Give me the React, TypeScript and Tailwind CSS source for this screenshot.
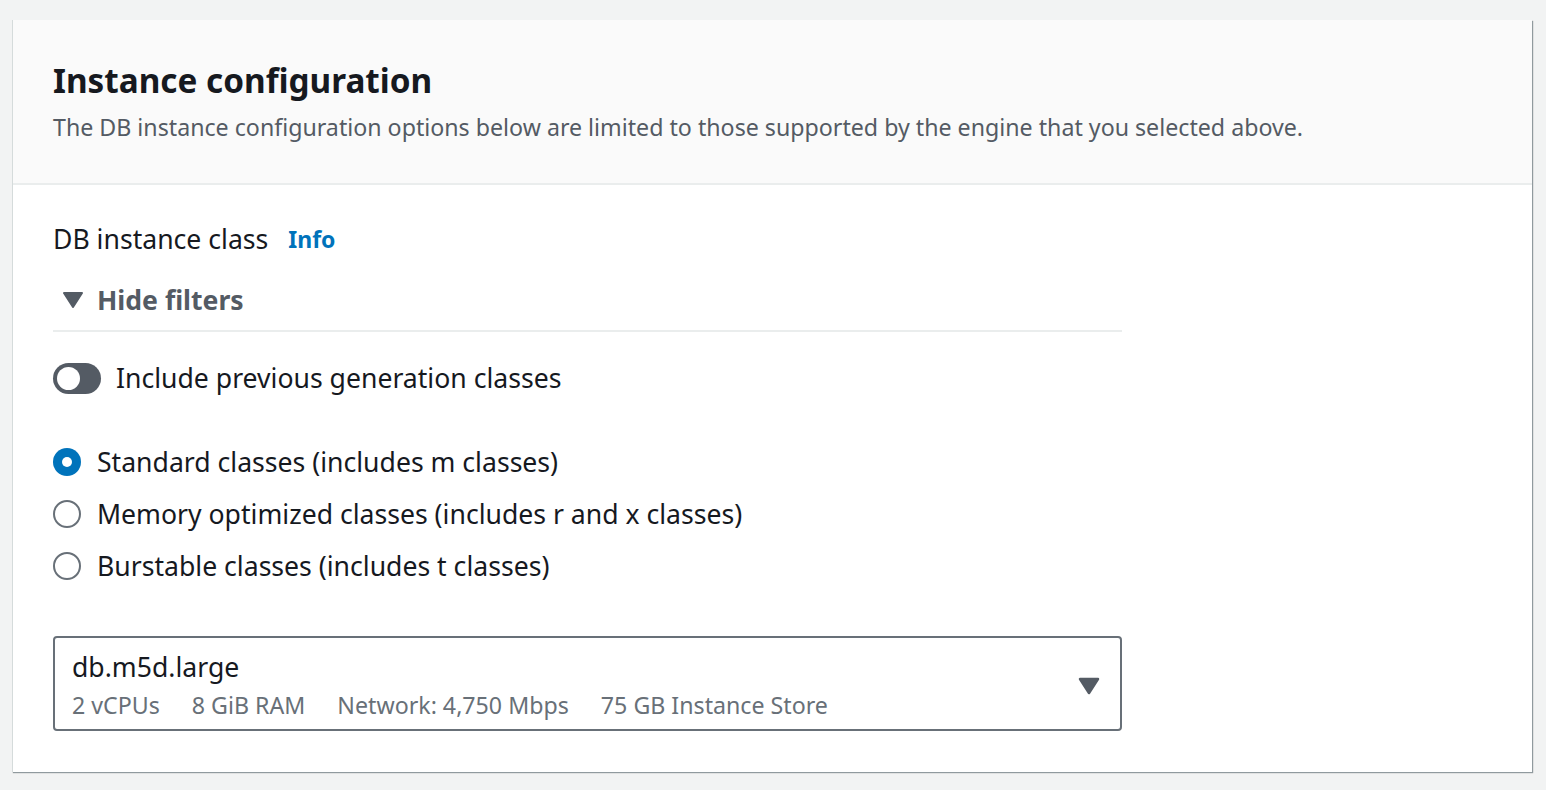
import React, { useState } from "react";

const font = { fontFamily: '"Noto Sans", "Open Sans", Arial, sans-serif' };

const options = [
  "Standard classes (includes m classes)",
  "Memory optimized classes (includes r and x classes)",
  "Burstable classes (includes t classes)",
];

export default function App() {
  const [selected, setSelected] = useState(0);
  const [prevGen, setPrevGen] = useState(false);

  return (
    <div className="min-h-[790px] bg-[#f2f3f3] pt-[20px] pl-[12px] pr-[14px] pb-[18px]" style={font}>
      <div className="bg-white border-l border-[#d5dbdb] shadow-[1px_1px_1px_0_rgba(0,28,36,0.3),1px_1px_1px_0_rgba(0,28,36,0.15)]">
        <div className="bg-[#fafafa] border-b-2 border-[#eaeded] pl-[40px] pt-[40px] pb-[41px]">
          <h2 className="text-[33.3px] leading-[40px] font-bold text-[#16191f]">
            Instance configuration
          </h2>
          <p className="mt-[12px] text-[23.2px] leading-[30px] text-[#545b64]">
            The DB instance configuration options below are limited to those supported by the engine that you selected above.
          </p>
        </div>

        <div className="pl-[40px] pt-[36px] pb-[41px]">
          <div className="flex items-center gap-[20px]">
            <span className="text-[26.6px] leading-[36px] text-[#16191f]">DB instance class</span>
            <a className="text-[23px] font-bold text-[#0073bb]">Info</a>
          </div>

          <div className="w-[1069px]">
            <div className="flex items-center gap-[14px] mt-[25px] pb-[12px] border-b-2 border-[#eaeded]">
              <svg width="20" height="16" viewBox="0 0 20 16" className="ml-[10px]">
                <path d="M1 1 L19 1 L10 15 Z" fill="#545b64" stroke="#545b64" strokeWidth="2" strokeLinejoin="round" />
              </svg>
              <span className="text-[26.6px] leading-[36px] font-bold text-[#545b64]">Hide filters</span>
            </div>

            <div className="flex items-center gap-[15px] mt-[28px] cursor-pointer" onClick={() => setPrevGen(!prevGen)}>
              <div className={`w-[48px] h-[31px] rounded-full p-[4px] flex ${prevGen ? "bg-[#0073bb] justify-end" : "bg-[#545b64] justify-start"}`}>
                <div className="w-[23px] h-[23px] rounded-full bg-white" />
              </div>
              <span className="text-[26.6px] leading-[36px] text-[#16191f]">Include previous generation classes</span>
            </div>

            <div className="flex flex-col gap-[16px] mt-[48px]">
              {options.map((label, i) => (
                <div key={i} className="flex items-center gap-[16px] cursor-pointer" onClick={() => setSelected(i)}>
                  {selected === i ? (
                    <div className="w-[28px] h-[28px] rounded-full bg-[#0073bb] flex items-center justify-center">
                      <div className="w-[10px] h-[10px] rounded-full bg-white" />
                    </div>
                  ) : (
                    <div className="w-[28px] h-[28px] rounded-full border-2 border-[#687078] bg-white" />
                  )}
                  <span className="text-[26.6px] leading-[36px] text-[#16191f]">{label}</span>
                </div>
              ))}
            </div>

            <div className="mt-[52px] border-2 border-[#687078] rounded-[4px] flex items-center pl-[17px] pr-[20px] pt-[12px] pb-[7px]">
              <div className="flex-1">
                <div className="text-[26.6px] leading-[34px] text-[#16191f]">db.m5d.large</div>
                <div className="mt-[4px] flex gap-[32px] text-[23.2px] leading-[34px] text-[#687078]">
                  <span>2 vCPUs</span>
                  <span>8 GiB RAM</span>
                  <span>Network: 4,750 Mbps</span>
                  <span>75 GB Instance Store</span>
                </div>
              </div>
              <svg width="22" height="18" viewBox="0 0 22 18">
                <path d="M2 2 L20 2 L11 16 Z" fill="#545b64" stroke="#545b64" strokeWidth="2.5" strokeLinejoin="round" />
              </svg>
            </div>
          </div>
        </div>
      </div>
    </div>
  );
}
